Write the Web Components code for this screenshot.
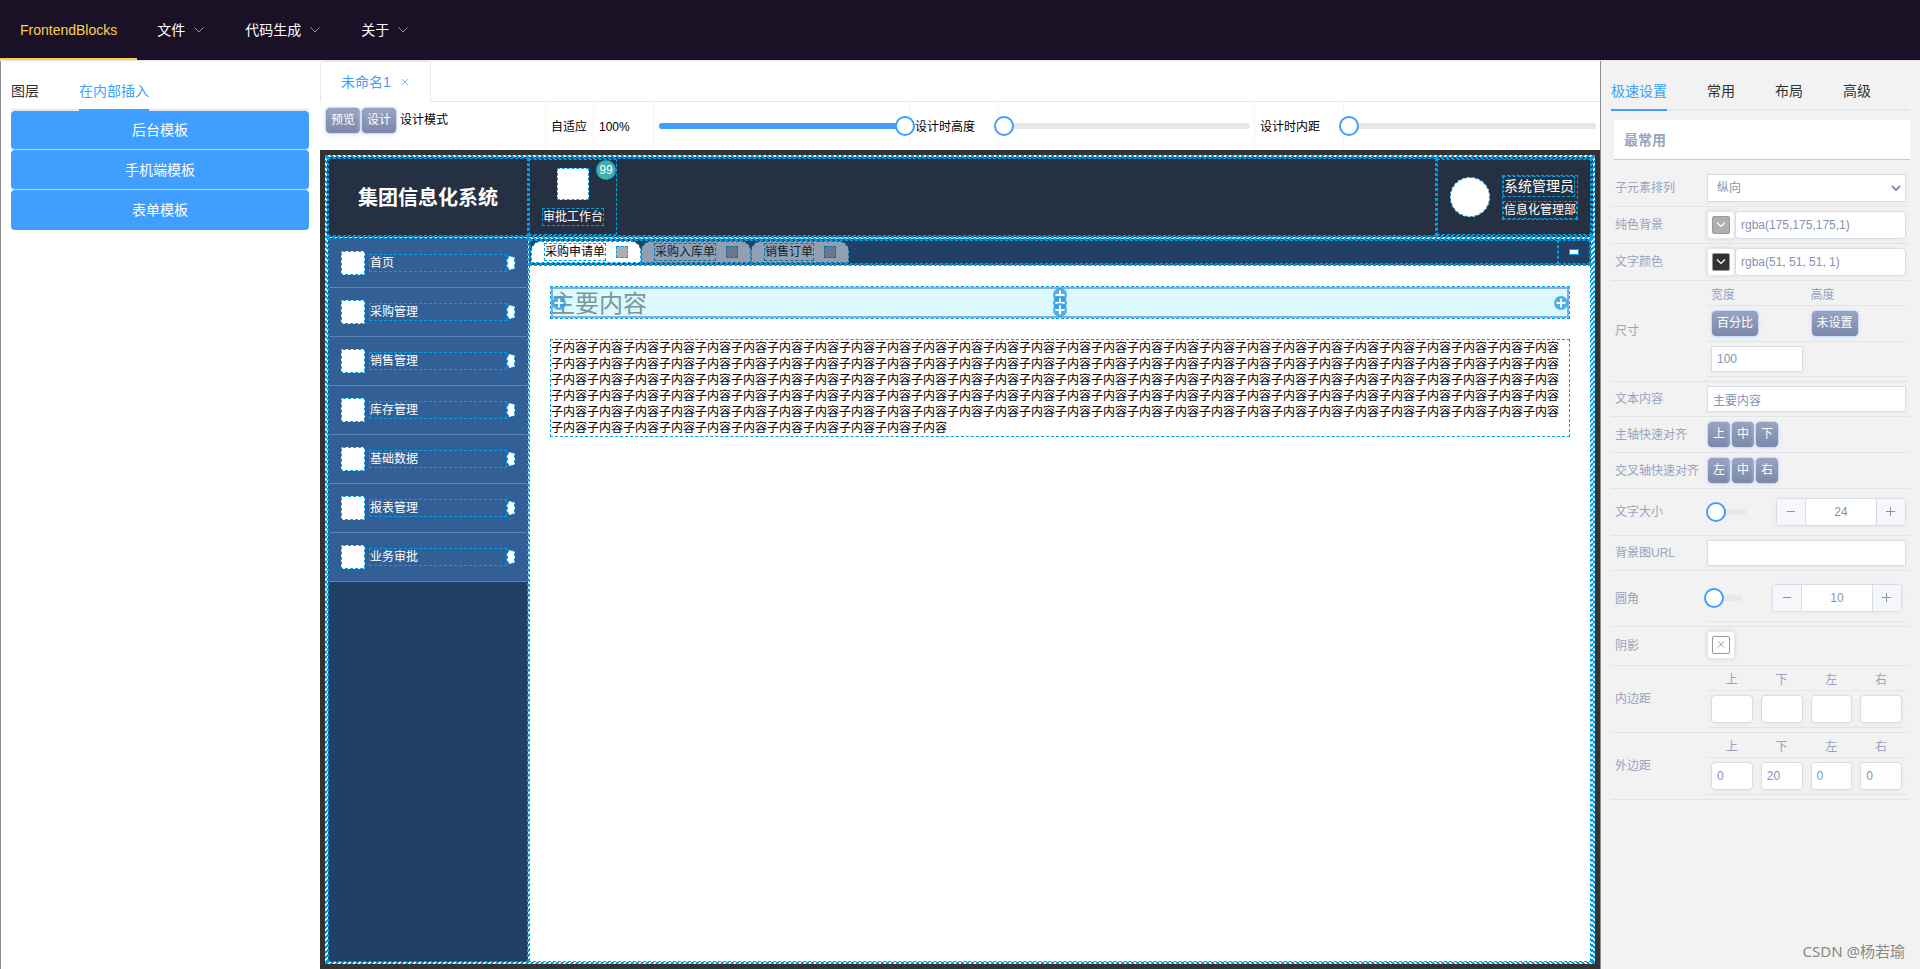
<!DOCTYPE html>
<html lang="zh-CN">
<head>
<meta charset="utf-8">
<title>FrontendBlocks</title>
<style>
html, body { margin: 0; height: 100%; }
body {
  font: 14px/20px "Liberation Sans", "Noto Sans CJK SC", sans-serif;
  color: #303133;
  background: #fff;
  overflow: hidden;
}
</style>
</head>
<body>
<app-shell></app-shell>
<script>
const BASE = `*{box-sizing:border-box} :host{box-sizing:border-box;display:block} :host([hidden]){display:none}
button,input,select{font:inherit;color:inherit;margin:0}`;

function define(name, render, after) {
  customElements.define(name, class extends HTMLElement {
    connectedCallback() {
      if (this.shadowRoot) return;
      const root = this.attachShadow({ mode: 'open' });
      const t = document.createElement('template');
      t.innerHTML = render(this);
      root.append(t.content.cloneNode(true));
      if (after) after(this, root);
    }
  });
}
const attr = (el, n, d = '') => el.getAttribute(n) ?? d;

/* ---------- small controls ---------- */
define('menu-item', el => `<style>${BASE}
:host{height:60px}
a{display:flex;align-items:center;gap:8px;height:60px;padding:0 20px;color:#fff;text-decoration:none;white-space:nowrap}
:host([active]) a{color:#ffd04b;border-bottom:2px solid #ffd04b;padding-top:2px}
svg{display:block}
</style><a href="#"><slot></slot>${el.hasAttribute('active') ? '' :
`<svg width="12" height="12" viewBox="0 0 12 12" fill="none" stroke="#909399"><path d="M1.5 3.5 6 8l4.500-4.500"/></svg>`}</a>`);

define('tab-bar', el => `<style>${BASE}
nav{display:flex;gap:40px;height:40px;border-bottom:2px solid #e4e7ed}
button{border:0;background:none;padding:0;height:40px;border-bottom:2px solid transparent;white-space:nowrap;line-height:40px}
button[aria-selected=true]{color:#409eff;border-color:#409eff}
</style><nav role="tablist">${attr(el, 'items').split(',').map((t, i) =>
`<button role="tab" aria-selected="${i == attr(el, 'current', 0)}">${t}</button>`).join('')}</nav>`);

define('wide-button', () => `<style>${BASE}
button{display:block;width:100%;height:40px;border:0;border-radius:4px;border-bottom:1px solid #b3d8ff;background:#409eff;color:#fff;padding:0}
:host([first]) button{height:39px}
:host([last]) button{border-bottom:0}
</style><button><slot></slot></button>`);

define('chip-button', () => `<style>${BASE}
:host{display:inline-block}
button{display:block;height:27px;padding:0 5px;border:1px solid #c6dcfa;border-radius:5px;color:#fff;font-size:12px;line-height:25px;
background:linear-gradient(#9aa4c1,#7b88ab);box-shadow:0 1px 4px #dfe6f2;white-space:nowrap}
</style><button><slot></slot></button>`);

define('range-slider', el => `<style>${BASE}
:host{position:relative;height:6px;border-radius:3px;background:#e4e7ed}
.fill{height:6px;border-radius:3px;background:#409eff;width:${attr(el, 'value', 0)}%}
input{position:absolute;left:-10px;top:-7px;width:calc(100% + 20px);height:20px;appearance:none;background:none}
input::-webkit-slider-thumb{appearance:none;width:20px;height:20px;border:2px solid #409eff;border-radius:50%;background:#fff}
</style><div class="fill"></div><input type="range" min="0" max="100" value="${attr(el, 'value', 0)}" aria-label="${attr(el, 'label')}">`);

define('number-stepper', el => `<style>${BASE}
:host{display:flex;width:130px;height:28px;border:1px solid #d8dce8;border-radius:4px;overflow:hidden;background:#fff;box-shadow:0 1px 4px #e6e8ee}
button{width:29px;border:0;background:#f5f7fa;padding:0;display:grid;place-items:center}
button:first-of-type{border-right:1px solid #d8dce8}
button:last-of-type{border-left:1px solid #d8dce8}
input{flex:1;min-width:0;border:0;padding:0;text-align:center;font-size:12px;color:#8492b4;background:none}
</style><button aria-label="减少"><svg width="10" height="10" stroke="#909399"><path d="M1 4.500h8"/></svg></button>
<input type="text" inputmode="numeric" value="${attr(el, 'value')}" aria-label="${attr(el, 'label')}">
<button aria-label="增加"><svg width="10" height="10" stroke="#909399"><path d="M0 4.500h9M4.500 0v9"/></svg></button>`);

define('color-picker', el => `<style>${BASE}
:host{width:28px;height:28px;flex:none}
button{width:28px;height:28px;padding:4px;border:1px solid #e6e6e6;border-radius:3px;background:#fff;box-shadow:0 0 4px #d4d4d4;display:block}
span{display:grid;place-items:center;width:18px;height:18px;border:1px solid #999;border-radius:2px;background:${attr(el, 'color', '#fff')}}
svg{display:block}
</style><button aria-label="${attr(el, 'label')}"><span>${el.hasAttribute('color')
? `<svg width="12" height="12" viewBox="0 0 12 12" fill="none" stroke="#fff" stroke-width="1.2"><path d="M2 3.500 6 7.500l4-4"/></svg>`
: `<svg width="12" height="12" viewBox="0 0 12 12" fill="none" stroke="#999"><path d="M3 2.500l6 6M9 2.500l-6 6"/></svg>`}</span></button>`);

/* ---------- left panel ---------- */
define('insert-panel', () => `<style>${BASE}
:host{border-left:1px solid #8c8c8c;padding:10px 11px 10px 10px}
</style><tab-bar items="图层,在内部插入" current="1"></tab-bar>
<wide-button first>后台模板</wide-button><wide-button>手机端模板</wide-button><wide-button last>表单模板</wide-button>`);

/* ---------- centre ---------- */
define('tool-bar', () => `<style>${BASE}
:host{display:grid;grid-template-columns:226px 48px 60px 1fr 89px 1fr 89px 1fr;height:48px;font-size:12px;line-height:16px;color:#000;flex:none}
div{display:flex;align-items:center;padding:1px 5px 0;white-space:nowrap;border-right:1px solid #f6f6f8}
div:last-child{border-right:0}
.line{padding:0 4px 0 5px}
.mode{align-items:flex-start;padding-top:5px}
.mode span{line-height:27px;margin-left:3px}
range-slider{flex:1}
</style>
<div class="mode"><chip-button>预览</chip-button><chip-button>设计</chip-button><span>设计模式</span></div>
<div>自适应</div><div>100%</div>
<div class="line"><range-slider value="100" label="缩放"></range-slider></div>
<div>设计时高度</div><div class="line"><range-slider label="设计时高度"></range-slider></div>
<div>设计时内距</div><div class="line"><range-slider label="设计时内距"></range-slider></div>`);

const DASH = `.d{border:1px dashed #00a0e9}`;

define('side-item', () => `<style>${BASE}${DASH}
:host{display:flex;align-items:center;height:49px;padding:0 12px;background:#315f96;border-bottom:1px solid #5684b9;color:#fff;font-size:12px;line-height:16px}
.icon{width:24px;height:24px;background:#fff;border-radius:2px}
.text{flex:1;margin-left:4px}
.more{width:8px;height:14px;background:#fff;border-radius:4px}
</style><i class="d icon"></i><span class="d text"><slot></slot></span><i class="d more"></i>`);

define('doc-tab', () => `<style>${BASE}${DASH}
:host{display:flex;align-items:center;gap:10px;height:22px;padding:0 12px;border:1px dashed #00a0e9;border-radius:10px 10px 0 0;background:#fff;color:#000;font-size:12px;line-height:16px;white-space:nowrap}
:host([dim]){opacity:.5}
i{width:12px;height:12px;background:#afafaf}
</style><span class="d"><slot></slot></span><i class="d"></i>`);

define('plus-dot', () => `<style>${BASE}
:host{width:14px;height:14px;opacity:.8}
svg{display:block}
</style><svg width="14" height="14" viewBox="0 0 14 14"><circle cx="7" cy="7" r="7" fill="#2b9fe3"/><path d="M7 2.500v9M2.500 7h9" stroke="#fff" stroke-width="2"/></svg>`);

define('design-canvas', () => `<style>${BASE}${DASH}
:host{flex:1;min-height:0;display:flex;background:#333;padding:5px;font-size:12px;line-height:16px}
.page,.frame{flex:1;min-width:0;display:flex;flex-direction:column;background:#fff}
header{display:flex;height:80px;background:#253142;color:#fff;flex:none}
h1{width:200px;margin:0;padding-top:2px;display:grid;place-items:center;font-size:20px;line-height:28px}
.apps{flex:1;display:flex}
.app{position:relative;width:88px;display:flex;flex-direction:column;align-items:center;gap:8px;padding-top:8px}
.app i{width:32px;height:32px;background:#fff}
.badge{position:absolute;top:0;right:0;width:20px;height:20px;border:1px dashed #00a0e9;border-radius:50%;background:#3eaeae;text-align:center;line-height:18px;font-weight:400}
.user{display:flex}
.card{display:flex;align-items:center;gap:12px;padding:0 12px}
.face{width:40px;height:40px;border-radius:50%;background:#fff}
.who{display:flex;flex-direction:column;align-items:flex-start;gap:4px}
.name{font-size:14px;line-height:19px}
.body{flex:1;min-height:0;display:flex;border-bottom:0}
aside{width:200px;background:#204065;border-bottom:0}
main{flex:1;min-width:0;display:flex;flex-direction:column;border-bottom:0}
.strip{display:flex;height:26px;background:#204065;flex:none}
.tabs{flex:1;display:flex}
.end{width:32px;display:grid;place-items:center}
.end i{width:10px;height:6px;background:#fff;border:1px solid #00a0e9}
.content{flex:1;padding:20px;border-bottom:0}
.sel{position:relative;height:33px;margin-bottom:20px}
h2{margin:0;height:31px;border:2px solid #7eb0e6;background:#dcf9fe;color:#78989b;font-weight:400;font-size:24px;line-height:29px;text-indent:-2px}
plus-dot{position:absolute}
.l{left:1px;top:9px}.r{right:1px;top:9px}
.t,.m,.b{left:calc(50% - 7px)}.t{top:1px}.m{top:9px}.b{bottom:1px}
p{margin:0;color:#000}
</style>
<div class="page d"><div class="frame d">
<header class="d">
<h1 class="d">集团信息化系统</h1>
<div class="apps d"><div class="app d"><i class="d"></i><span class="d">审批工作台</span><b class="badge">99</b></div></div>
<div class="user d"><div class="card d"><i class="face d"></i><div class="who d"><span class="name d">系统管理员</span><span class="d">信息化管理部</span></div></div></div>
</header>
<div class="body d">
<aside class="d">${['首页', '采购管理', '销售管理', '库存管理', '基础数据', '报表管理', '业务审批'].map(t => `<side-item>${t}</side-item>`).join('')}</aside>
<main class="d">
<div class="strip d"><div class="tabs d"><doc-tab>采购申请单</doc-tab><doc-tab dim>采购入库单</doc-tab><doc-tab dim>销售订单</doc-tab></div><div class="end d"><i></i></div></div>
<div class="content d">
<div class="sel d"><h2>主要内容</h2><plus-dot class="l"></plus-dot><plus-dot class="t"></plus-dot><plus-dot class="m"></plus-dot><plus-dot class="b"></plus-dot><plus-dot class="r"></plus-dot></div>
<p class="d">${'子内容'.repeat(151)}</p>
</div></main></div>
</div></div>`);

define('work-area', () => `<style>${BASE}
:host{display:flex;flex-direction:column;min-width:0}
.files{display:flex;height:41px;border-bottom:1px solid #e4e7ed;flex:none}
.file{display:flex;align-items:center;gap:9px;height:41px;padding:0 20px;border:1px solid #e4e7ed;border-bottom-color:#fff;border-radius:4px 4px 0 0;color:#409eff;white-space:nowrap}
button{border:0;background:none;padding:0;width:10px;height:10px;display:block}
svg{display:block}
</style>
<div class="files"><div class="file">未命名1<button aria-label="关闭"><svg width="10" height="10" fill="none" stroke="#79bbff"><path d="M2 2l6 6M8 2l-6 6"/></svg></button></div></div>
<tool-bar></tool-bar><design-canvas></design-canvas>`);

/* ---------- property panel ---------- */
const spacing = (name, id, v) => `<tr><th scope="row">${name}</th><td><table class="sub four"><thead><tr>${['上', '下', '左', '右'].map((s, i) =>
`<td><label for="${id}${i}">${s}</label></td>`).join('')}</tr></thead><tbody><tr>${v.map((x, i) => `<td><input class="box round" id="${id}${i}" value="${x}"></td>`).join('')}</tr></tbody></table></td></tr>`;

define('property-panel', () => `<style>${BASE}
:host{border-left:1px solid #8c8c8c;background:#f2f2f2;padding:10px;color:#303133}
h3{margin:9px 0 0 3px;padding:0 10px;height:40px;line-height:40px;background:#fff;border-bottom:1px solid #c8ccd0;font-size:14px;color:#99a3bf}
table{border-collapse:separate;border-spacing:0;table-layout:fixed;width:100%}
.main{margin-top:10px;font-size:12px;line-height:16px;color:#99a3bf}
col.k{width:92px}
th{font-weight:400;text-align:left;padding:0 4px;white-space:nowrap}
td{padding:4px}
.main>tbody>tr>th,.main>tbody>tr>td{border-bottom:1px solid #e2e4e6}
.sub td{border-bottom:1px solid #e2e4e6}
.sub thead td{padding:2px 4px}
.sub thead label{display:block}
.four thead td{text-align:center}
.line{display:flex;align-items:center}
.box,select{display:block;width:100%;height:26px;padding:0 5px;border:1px solid #d8dce8;background:#fff;color:#8492b4;outline:0;box-shadow:0 1px 4px #e6e8ee;border-radius:0}
.round{height:28px;border-radius:4px}
.pick{position:relative}
select{appearance:none;height:28px;padding:0 9px}
.pick svg{position:absolute;right:5px;top:9px;pointer-events:none}
.fs,.rad{height:38px}
.fs range-slider{width:30px;margin-left:9px}
.rad range-slider{width:28px;margin-left:3px}
.line number-stepper{margin-left:auto}
.shadow{height:30px}
</style>
<tab-bar items="极速设置,常用,布局,高级"></tab-bar>
<h3>最常用</h3>
<table class="main"><colgroup><col class="k"><col></colgroup><tbody>
<tr><th scope="row"><label for="dir">子元素排列</label></th><td><div class="pick"><select id="dir"><option>纵向</option></select><svg width="10" height="10" fill="none" stroke="#8492b4" stroke-width="2"><path d="M1 3l4 4 4-4"/></svg></div></td></tr>
<tr><th scope="row"><label for="bg">纯色背景</label></th><td><div class="line"><color-picker color="#afafaf" label="选择背景色"></color-picker><input class="box round" id="bg" value="rgba(175,175,175,1)"></div></td></tr>
<tr><th scope="row"><label for="fg">文字颜色</label></th><td><div class="line"><color-picker color="#333" label="选择文字颜色"></color-picker><input class="box round" id="fg" value="rgba(51, 51, 51, 1)"></div></td></tr>
<tr><th scope="row">尺寸</th><td><table class="sub"><thead><tr><td><label for="w">宽度</label></td><td>高度</td></tr></thead><tbody>
<tr><td><div class="line"><chip-button>百分比</chip-button></div></td><td><div class="line"><chip-button>未设置</chip-button></div></td></tr>
<tr><td><input class="box" id="w" value="100"></td><td></td></tr></tbody></table></td></tr>
<tr><th scope="row"><label for="txt">文本内容</label></th><td><input class="box" id="txt" value="主要内容"></td></tr>
<tr><th scope="row">主轴快速对齐</th><td><div class="line"><chip-button>上</chip-button><chip-button>中</chip-button><chip-button>下</chip-button></div></td></tr>
<tr><th scope="row">交叉轴快速对齐</th><td><div class="line"><chip-button>左</chip-button><chip-button>中</chip-button><chip-button>右</chip-button></div></td></tr>
<tr><th scope="row">文字大小</th><td><div class="line fs"><range-slider label="文字大小"></range-slider><number-stepper value="24" label="文字大小"></number-stepper></div></td></tr>
<tr><th scope="row"><label for="url">背景图URL</label></th><td><input class="box" id="url" value=""></td></tr>
<tr><th scope="row">圆角</th><td><table class="sub"><tbody><tr><td><div class="line rad"><range-slider label="圆角"></range-slider><number-stepper value="10" label="圆角"></number-stepper></div></td></tr></tbody></table></td></tr>
<tr><th scope="row">阴影</th><td><div class="shadow"><color-picker label="阴影"></color-picker></div></td></tr>
${spacing('内边距', 'p', ['', '', '', ''])}
${spacing('外边距', 'm', ['0', '20', '0', '0'])}
</tbody></table>`);

define('app-shell', () => `<style>${BASE}
:host{display:flex;flex-direction:column;height:100vh;position:relative}
header{display:flex;height:61px;background:#1a1127;border-bottom:1px solid #e6e6e6;flex:none}
.cols{flex:1;min-height:0;display:grid;grid-template-columns:320px minmax(0,1fr) 320px}
.mark{position:absolute;right:15px;bottom:8px;font:15px/20px "Noto Sans","Noto Sans CJK SC",sans-serif;color:#858585;text-shadow:0 0 1px #fff;white-space:nowrap}
</style>
<header><menu-item active>FrontendBlocks</menu-item><menu-item>文件</menu-item><menu-item>代码生成</menu-item><menu-item>关于</menu-item></header>
<div class="cols"><insert-panel></insert-panel><work-area></work-area><property-panel></property-panel></div>
<div class="mark">CSDN @杨若瑜</div>`);
</script>
</body>
</html>
